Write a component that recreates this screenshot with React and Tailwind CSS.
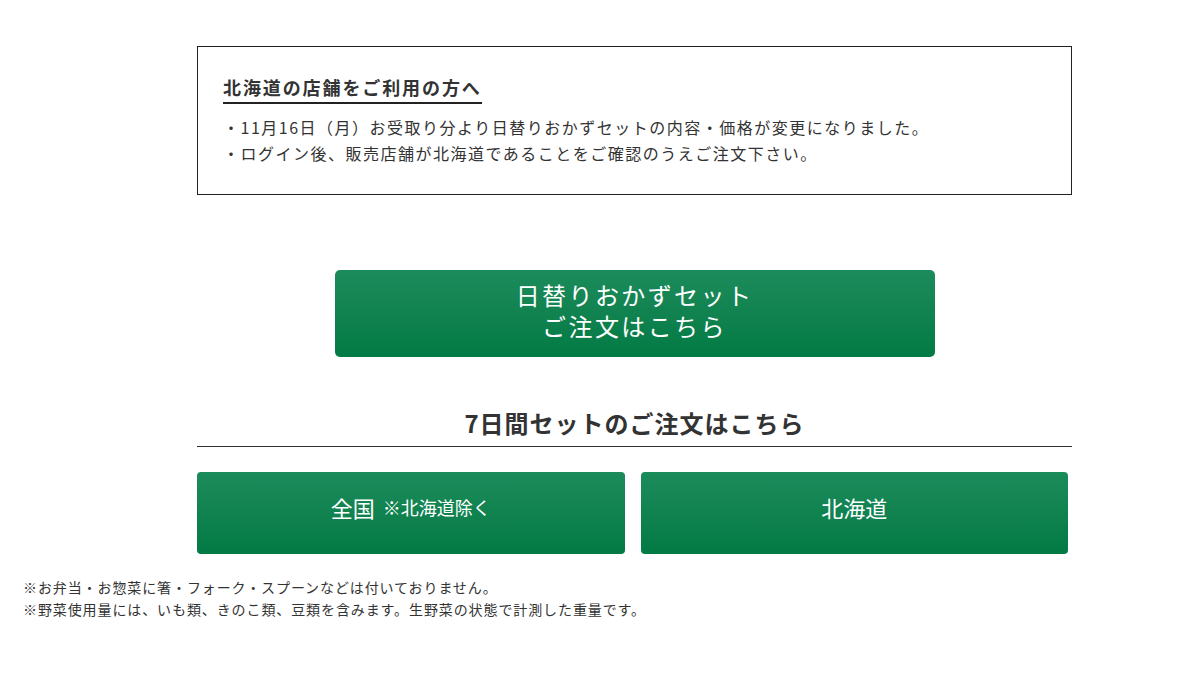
export default function App() {
	return (
		<div
			className="min-h-[680px] bg-white text-[#333]"
			style={{ fontFamily: '"Noto Sans CJK JP", "Noto Sans", sans-serif' }}
		>
			<div className="ml-[197px] w-[875px] pt-[46px]">
				{/* Notice box */}
				<div className="border border-[#222] px-[25px] pt-[26px] pb-[28px]">
					<h3 className="inline-block border-b-2 border-[#222] pb-[1px] text-[18px] font-bold leading-[28px] tracking-[1.9px]">
						北海道の店舗をご利用の方へ
					</h3>
					<div className="mt-[10px] text-[16px] leading-[26px] tracking-[1.5px]">
						<p>・11月16日（月）お受取り分より日替りおかずセットの内容・価格が変更になりました。</p>
						<p>・ログイン後、販売店舗が北海道であることをご確認のうえご注文下さい。</p>
					</div>
				</div>

				{/* Main order button */}
				<div className="mt-[75px] flex justify-center">
					<a
						href="#"
						className="flex h-[87px] w-[600px] flex-col items-center justify-center gap-[1px] rounded-[5px] bg-gradient-to-b from-[#1b8b5b] to-[#027a44] pb-[7px] text-[24px] leading-[30px] tracking-[2.4px] text-white"
					>
						<span className="block">日替りおかずセット</span>
						<span className="block">ご注文はこちら</span>
					</a>
				</div>

				{/* 7-day set */}
				<h2 className="mt-[48px] border-b border-[#333] pb-[5px] text-center text-[24px] font-bold leading-[36px] tracking-[1px]">
					7日間セットのご注文はこちら
				</h2>
				<div className="mt-[25px] flex gap-[16px] pr-[4px]">
					<a
						href="#"
						className="flex h-[82px] flex-1 items-center justify-center rounded-[4px] bg-gradient-to-b from-[#1b8b5b] to-[#027a44] pb-[12px] text-white"
					>
						<span className="text-[22px]">全国</span>
						<span className="ml-[8px] text-[18px]">※北海道除く</span>
					</a>
					<a
						href="#"
						className="flex h-[82px] flex-1 items-center justify-center rounded-[4px] bg-gradient-to-b from-[#1b8b5b] to-[#027a44] pb-[12px] text-[22px] text-white"
					>
						北海道
					</a>
				</div>
			</div>

			{/* Footnotes */}
			<div className="mt-[22px] pl-[23px] text-[14px] leading-[22px] tracking-[0.9px] text-[#333]">
				<p>※お弁当・お惣菜に箸・フォーク・スプーンなどは付いておりません。</p>
				<p>※野菜使用量には、いも類、きのこ類、豆類を含みます。生野菜の状態で計測した重量です。</p>
			</div>
		</div>
	);
}
